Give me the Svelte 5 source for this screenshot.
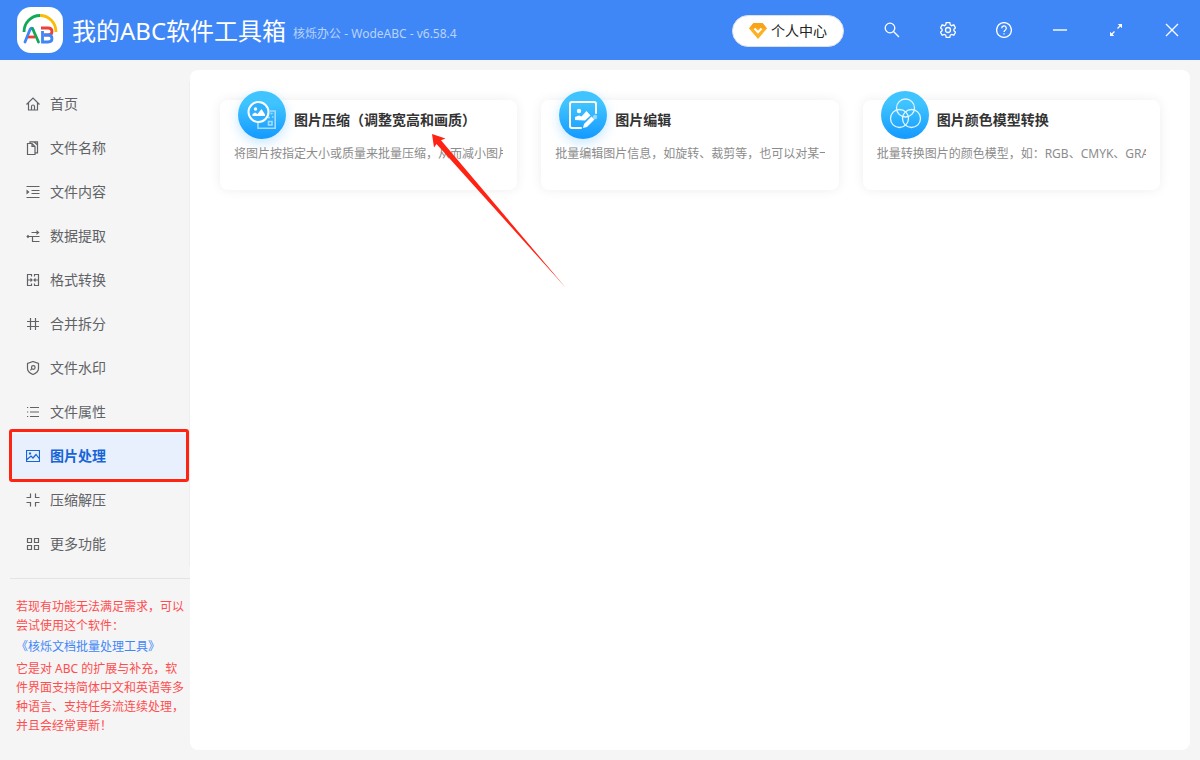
<script lang="ts">
  type NavItem = { id: string; label: string; icon: string; fill?: string };
  type Tool = { id: string; title: string; desc: string; glow: boolean };

  const navItems: NavItem[] = [
    {
      id: 'home',
      label: '首页',
      icon: 'M0.500 7.500 7 1l6.500 6.500M2.500 6V13h9V6M5.500 13V9.500a1.500 1.500 0 0 1 3 0V13'
    },
    {
      id: 'name',
      label: '文件名称',
      icon: 'M1.500 2.500H6L9 5.500v8H1.500zM6 2.500v3h3M4 2.500V.8h7.500v11H9.500M8 .8 11.500 4'
    },
    {
      id: 'content',
      label: '文件内容',
      icon: 'M.5 1.500h13M5.500 5.500h8M5.500 8.500h8M.5 12.500h13',
      fill: 'M.5 4.500 3.500 7 .5 9.500z'
    },
    {
      id: 'extract',
      label: '数据提取',
      icon: 'M1.500 7.500h5M5.500 3.500h6M13.500 7.500h-7v5h7',
      fill: 'M.3 7.500 2 5.800l1.700 1.700L2 9.200zM10.500 1 13.500 3.500 10.500 6z'
    },
    {
      id: 'format',
      label: '格式转换',
      icon: 'M5.500 3.500v-2h-4v11h4v-2M8.500 3.500v-2h4v11h-4v-2M1.500 7H6M12.500 7H8M4.500 5.500 6 7 4.500 8.500M9.500 5.500 8 7l1.500 1.500'
    },
    { id: 'merge', label: '合并拆分', icon: 'M4.500 1v12M9.500 1v12M1 4.500h12M1 9.500h12' },
    {
      id: 'watermark',
      label: '文件水印',
      icon: 'M7 .5 12.500 2.500v5c0 3-2.300 4.700-5.500 6-3.200-1.300-5.500-3-5.500-6v-5zM5.500 6.500a1.800 1.800 0 1 1 3.600 0 1.800 1.800 0 0 1-3.600 0M5.800 7.500 4.500 9.300'
    },
    {
      id: 'attr',
      label: '文件属性',
      icon: 'M4 2.500h9M4 7h9M4 11.500h9M1 2.500h1.200M1 7h1.200M1 11.500h1.200'
    },
    {
      id: 'image',
      label: '图片处理',
      icon: 'M.5 1.500h13v11H.5zM1 10.500 5 7l2 2 3-3.500 3.500 4.500M3.500 4h1v1h-1z'
    },
    {
      id: 'zip',
      label: '压缩解压',
      icon: 'M4.500 .5v4H.5M9.500 .5v4h4M4.500 13.500v-4H.5M9.500 13.500v-4h4'
    },
    {
      id: 'more',
      label: '更多功能',
      icon: 'M1.500 1.500h4v4h-4zM8.500 1.500h4v4h-4zM1.500 8.500h4v4h-4zM8.500 8.500h4v4h-4z'
    }
  ];

  const tools: Tool[] = [
    {
      id: 'compress',
      title: '图片压缩（调整宽高和画质）',
      desc: '将图片按指定大小或质量来批量压缩，从而减小图片',
      glow: true
    },
    {
      id: 'edit',
      title: '图片编辑',
      desc: '批量编辑图片信息，如旋转、裁剪等，也可以对某一',
      glow: true
    },
    {
      id: 'color',
      title: '图片颜色模型转换',
      desc: '批量转换图片的颜色模型，如：RGB、CMYK、GRAY',
      glow: false
    }
  ];

  let active = $state('image');
</script>

<div class="app">
  <header class="topbar">
    <svg class="logo" viewBox="0 0 46 46" aria-hidden="true">
      <rect width="46" height="46" rx="14" fill="#fff" />
      <g fill="none" stroke-width="2.800">
        <path d="M7 25A16 16.500 0 0 1 23 8.500" stroke="#0fa958" />
        <path d="M23 8.500A16 16.500 0 0 1 39 25" stroke="#fbbc05" />
        <path d="M8 35 13 22.500q1.500-2.500 3 0" stroke="#3f86f7" stroke-linecap="round" />
        <path d="M15.500 21.500 21.500 35" stroke="#0fa958" stroke-linecap="round" />
        <path d="M11 30h7" stroke="#ea4335" />
        <path d="M24 21h7q4 0 4 3.500t-4 3.500h-4" stroke="#ea4335" />
        <path d="M27 28h4q4 0 4 3.500T31 35h-5.500V24" stroke="#3f86f7" />
      </g>
    </svg>
    <h1>我的ABC软件工具箱</h1>
    <span class="version">核烁办公 - WodeABC - v6.58.4</span>

    <button class="account" type="button">
      <svg width="18" height="16" viewBox="0 0 18 16" aria-hidden="true">
        <path d="M4.500 0h9L18 5.500 9 16 0 5.500z" fill="#fdb022" />
        <path d="M4.500 0h9L18 5.500H0z" fill="#f9a31a" />
        <path d="M5.500 5.500 9 9.300l3.500-3.800" fill="none" stroke="#fff" stroke-width="2" />
      </svg>
      个人中心
    </button>

    <div class="window-tools">
      <button type="button" aria-label="搜索">
        <svg viewBox="0 0 16 16"><circle cx="6" cy="6" r="4.800" /><path d="m9.500 9.500 5.500 5.500" /></svg>
      </button>
      <button type="button" aria-label="设置">
        <svg viewBox="0 0 16 16">
          <path d="M6.200.7h3.600l.5 2.200 1.300.8 2.200-.8 1.700 3-1.600 1.500v1.300l1.600 1.500-1.700 3-2.200-.7-1.300.7-.5 2.100H6.200l-.5-2.100-1.300-.7-2.200.7-1.700-3 1.600-1.500V7.400L.5 5.900l1.700-3 2.200.8 1.300-.8z" />
          <circle cx="8" cy="8" r="2.500" />
        </svg>
      </button>
      <button type="button" aria-label="帮助">
        <svg viewBox="0 0 16 16">
          <circle cx="8" cy="8" r="7.400" />
          <path d="M5.700 6.300a2.300 2.300 0 1 1 3.400 2C8.200 8.700 8 9 8 10M8 11.200v1.200" />
        </svg>
      </button>
      <button type="button" aria-label="最小化">
        <svg viewBox="0 0 16 16"><path d="M1 8h14" stroke-width="2" stroke-opacity=".7" /></svg>
      </button>
      <button type="button" aria-label="最大化">
        <svg viewBox="0 0 16 16">
          <path d="m9.500 6.500 3-3M6.500 9.500l-3 3" />
          <path d="M9.800 2H14v4.200zM2 9.800V14h4.200z" fill="#fff" stroke="none" />
        </svg>
      </button>
      <button type="button" aria-label="关闭">
        <svg viewBox="0 0 16 16"><path d="m2 2 12 12M14 2 2 14" /></svg>
      </button>
    </div>
  </header>

  <div class="body">
    <aside class="sidebar">
      <nav>
        {#each navItems as item (item.id)}
          <a
            href={`#${item.id}`}
            class:active={active === item.id}
            class:marked={item.id === 'image'}
            onclick={() => (active = item.id)}
          >
            <svg viewBox="0 0 14 14" aria-hidden="true">
              <path d={item.icon} />
              {#if item.fill}
                <path d={item.fill} class="solid" />
              {/if}
            </svg>
            {item.label}
          </a>
        {/each}
      </nav>

      <div class="notice">
        <p>若现有功能无法满足需求，可以尝试使用这个软件：</p>
        <a href="#docs">《核烁文档批量处理工具》</a>
        <p>它是对 ABC 的扩展与补充，软件界面支持简体中文和英语等多种语言、支持任务流连续处理，并且会经常更新！</p>
      </div>
    </aside>

    <main>
      <div class="grid">
        {#each tools as tool (tool.id)}
          <article class="card">
            <div class="card-head">
              <span class="badge" class:glow={tool.glow}>
                <svg viewBox="0 0 48 48" aria-hidden="true">
                  {#if tool.id === 'compress'}
                    <g fill="none" stroke="#a3dbff" stroke-width="1.600">
                      <path d="M20 31v6.200h17.200V20H32" />
                      <path d="M30.500 30.500h3.500v3.500h-3.500zM30 26.500h2M34 26h1.500M32.500 22.500h2" />
                    </g>
                    <circle cx="20.500" cy="21" r="10" fill="#2eb0ff" stroke="#fff" stroke-width="2" />
                    <circle cx="17.500" cy="18" r="1.700" fill="#fff" />
                    <path d="M14.500 25v-2l2.500-1.500 2.500 1.500 4-5 3.500 5.500V25z" fill="#fff" />
                  {:else if tool.id === 'edit'}
                    <path
                      d="M37 22V13a2 2 0 0 0-2-2H13a2 2 0 0 0-2 2v22a2 2 0 0 0 2 2h9"
                      fill="none"
                      stroke="#fff"
                      stroke-width="2"
                      stroke-linecap="round"
                    />
                    <circle cx="20" cy="20" r="2.200" fill="#fff" />
                    <path d="M16 29v-3l4-1.500 2.500 1 5-5.500 4 4.500-5.500 5z" fill="#fff" />
                    <path d="m24 37 1-4 7.500-7.500 3 3L28 36z" fill="#fff" />
                    <circle cx="36" cy="26" r="2.200" fill="#9bd8ff" />
                  {:else}
                    <g fill="none" stroke="#e3f5ff" stroke-width="1.300">
                      <circle cx="24.500" cy="17" r="9" />
                      <circle cx="18.500" cy="27.500" r="9" />
                      <circle cx="30.500" cy="27.500" r="9" />
                    </g>
                  {/if}
                </svg>
              </span>
              <h2>{tool.title}</h2>
            </div>
            <p>{tool.desc}</p>
          </article>
        {/each}
      </div>

      <svg class="pointer" width="136" height="158" viewBox="0 0 136 158" aria-hidden="true">
        <path d="M2 4 15.500 8.500l-4.500 1.800L136 158 6.500 14 4 17.500z" fill="#ff2314" />
      </svg>
    </main>
  </div>
</div>

<style>
  :global(body) {
    margin: 0;
    background: #f5f5f5;
  }

  .app {
    display: flex;
    flex-direction: column;
    min-height: 100vh;
    font-family: 'Noto Sans', 'Noto Sans CJK SC', sans-serif;
    font-size: 14px;
    color: #333;
  }

  h1,
  h2,
  p {
    margin: 0;
  }

  button {
    font: inherit;
    cursor: pointer;
  }

  a {
    text-decoration: none;
  }

  .topbar {
    display: flex;
    align-items: center;
    height: 60px;
    padding-left: 17px;
    background: #3f86f7;
    color: #fff;
  }

  .logo {
    width: 46px;
    height: 46px;
    margin-right: 9px;
  }

  .topbar h1 {
    padding-top: 2px;
    font-size: 24px;
    font-weight: 400;
    line-height: 32px;
    white-space: nowrap;
  }

  .version {
    margin-left: 7px;
    padding-top: 8px;
    font-size: 12px;
    line-height: 20px;
    white-space: nowrap;
    color: #bad4fc;
  }

  .account {
    display: flex;
    align-items: center;
    justify-content: center;
    gap: 4px;
    width: 112px;
    height: 32px;
    margin-top: 2px;
    margin-left: auto;
    padding: 0;
    border: 1px solid #dcdfe6;
    border-radius: 16px;
    background: #fff;
    color: #222;
    line-height: 20px;
  }

  .window-tools {
    display: flex;
    margin-left: 20px;
  }

  .window-tools button {
    display: grid;
    place-items: center;
    width: 56px;
    height: 60px;
    padding: 0;
    border: 0;
    background: transparent;
  }

  .window-tools svg {
    width: 16px;
    height: 16px;
    fill: none;
    stroke: #fff;
    stroke-width: 1.3;
  }

  .body {
    display: flex;
    flex: 1;
    padding: 10px 10px 10px 0;
  }

  .sidebar {
    flex: none;
    box-sizing: border-box;
    width: 190px;
    padding: 12px 0 0 10px;
  }

  nav {
    border-right: 1px solid #eee;
  }

  nav a {
    display: flex;
    align-items: center;
    gap: 10px;
    height: 44px;
    padding-left: 16px;
    line-height: 20px;
    color: #606266;
  }

  nav svg {
    width: 14px;
    height: 14px;
    fill: none;
    stroke: currentColor;
    stroke-width: 1.2;
  }

  nav .solid {
    fill: currentColor;
    stroke: none;
  }

  nav a.active {
    background: #e8effd;
    color: #1665d8;
    font-weight: 700;
  }

  .marked {
    position: relative;
  }

  .marked::after {
    content: '';
    position: absolute;
    inset: -5px 0 -4px -1px;
    border: 3px solid #ff2314;
    border-radius: 3px;
  }

  .notice {
    margin-top: 12px;
    padding: 18px 4px 0 6px;
    border-top: 1px solid #e4e4e4;
    font-size: 12px;
    line-height: 19px;
    color: #ff4d4f;
  }

  .notice a {
    display: block;
    line-height: 24px;
    color: #3f86f7;
  }

  main {
    position: relative;
    flex: 1;
    min-width: 0;
    padding: 30px;
    border-radius: 8px;
    background: #fff;
  }

  .grid {
    display: grid;
    grid-template-columns: repeat(3, minmax(0, 1fr));
    gap: 24px;
  }

  .card {
    box-sizing: border-box;
    height: 90px;
    padding: 0 14px;
    border-radius: 8px;
    background: #fff;
    box-shadow: 0 0 12px rgba(0, 0, 0, 0.07);
  }

  .card-head {
    display: flex;
    gap: 8px;
    height: 44px;
    padding-left: 4px;
  }

  .badge {
    flex: none;
    width: 48px;
    height: 48px;
    margin-top: -9px;
    border-radius: 50%;
    background: linear-gradient(#40c4ff 25%, #169cff 95%);
  }

  .badge.glow {
    box-shadow: 0 4px 12px rgba(22, 156, 255, 0.25);
  }

  .badge svg {
    display: block;
  }

  .card h2 {
    padding-top: 10px;
    font-size: 14px;
    font-weight: 700;
    line-height: 20px;
    white-space: nowrap;
  }

  .card p {
    overflow: hidden;
    font-size: 12px;
    line-height: 20px;
    white-space: nowrap;
    color: #8c8c8c;
  }

  .pointer {
    position: absolute;
    top: 60px;
    left: 240px;
    pointer-events: none;
  }
</style>
